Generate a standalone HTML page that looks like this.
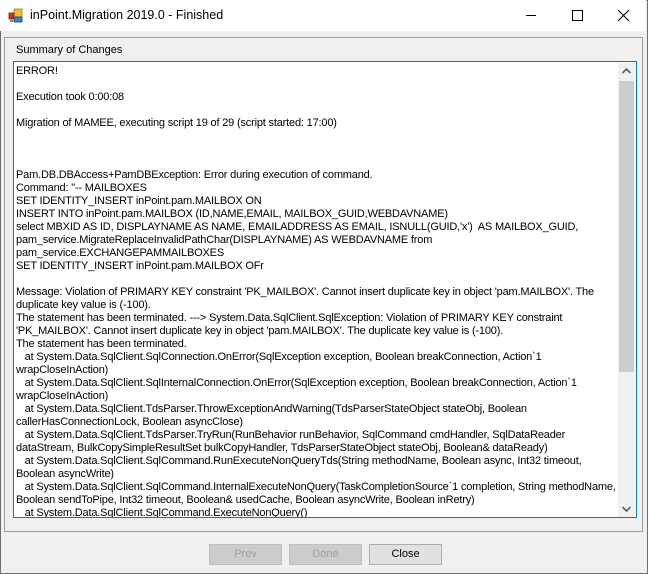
<!DOCTYPE html>
<html><head><style>
*{margin:0;padding:0;box-sizing:border-box}
body{width:648px;height:574px;overflow:hidden;background:#f0f0f0;font-family:"Liberation Sans",Arial,sans-serif;position:relative}
.win{position:absolute;left:0;top:0;width:648px;height:574px;border:1px solid #6e6e6e;border-top:1px solid #8a8a8a}
.title{position:absolute;left:0;top:0;width:646px;height:31px;background:#fff}
.ttext{position:absolute;left:30px;top:8px;font-size:12.5px;color:#000}
.ctl{position:absolute;top:0;height:31px;width:46px}
.grp{position:absolute;left:4px;top:37px;width:639px;height:495px;border:1px solid #a0a0a0}
.lbl{position:absolute;left:14px;top:44px;font-size:11px;background:#f0f0f0;padding:0 2px;color:#000}
.tb{position:absolute;left:13px;top:61px;width:624px;height:457px;border:1px solid #0078d7;background:#fff;overflow:hidden}
.txt{position:absolute;left:2px;top:3px;font-size:11px;line-height:13px;white-space:pre;color:#000;letter-spacing:-0.18px}
.sb{position:absolute;left:604px;top:1px;width:17px;height:454px;background:#f0f0f0}
.thumb{position:absolute;left:1px;top:18px;width:15px;height:291px;background:#cdcdcd}
.btn{position:absolute;top:544px;width:73px;height:21px;font-size:11px;text-align:center;line-height:19px}
.dis{background:#cccccc;border:1px solid #bfbfbf;color:#a0a0a0}
.en{background:#e1e1e1;border:1px solid #adadad;color:#000}
</style></head><body>
<div class="win"></div>
<div class="title">
<svg style="position:absolute;left:8px;top:8px" width="16" height="16" viewBox="0 0 16 16">
<rect x="6" y="1" width="8" height="8" fill="#f2c01e" stroke="#9a7a10" stroke-width="0.8"/>
<rect x="1" y="5" width="5" height="6" fill="#d03020" stroke="#7a1a10" stroke-width="0.8"/>
<rect x="6" y="9" width="8" height="5" fill="#4080d0" stroke="#204080" stroke-width="0.8"/>
<rect x="2" y="12" width="3" height="2" fill="#808080"/>
</svg>
<div class="ttext">inPoint.Migration 2019.0 - Finished</div>
<svg class="ctl" style="left:508px" viewBox="0 0 46 31"><line x1="18" y1="15.5" x2="28" y2="15.5" stroke="#000" stroke-width="1"/></svg>
<svg class="ctl" style="left:554px" viewBox="0 0 46 31"><rect x="18.5" y="10.5" width="10" height="10" fill="none" stroke="#000" stroke-width="1"/></svg>
<svg class="ctl" style="left:600px" viewBox="0 0 46 31"><path d="M18 10 L29 21 M29 10 L18 21" stroke="#000" stroke-width="1.1"/></svg>
</div>
<div class="grp"></div>
<div class="lbl">Summary of Changes</div>
<div class="tb">
<div class="txt">ERROR!

Execution took 0:00:08

Migration of MAMEE, executing script 19 of 29 (script started: 17:00)



Pam.DB.DBAccess+PamDBException: Error during execution of command.
Command: "-- MAILBOXES
SET IDENTITY_INSERT inPoint.pam.MAILBOX ON
INSERT INTO inPoint.pam.MAILBOX (ID,NAME,EMAIL, MAILBOX_GUID,WEBDAVNAME)
select MBXID AS ID, DISPLAYNAME AS NAME, EMAILADDRESS AS EMAIL, ISNULL(GUID,'x')  AS MAILBOX_GUID,
pam_service.MigrateReplaceInvalidPathChar(DISPLAYNAME) AS WEBDAVNAME from
pam_service.EXCHANGEPAMMAILBOXES
SET IDENTITY_INSERT inPoint.pam.MAILBOX OFr

Message: Violation of PRIMARY KEY constraint 'PK_MAILBOX'. Cannot insert duplicate key in object 'pam.MAILBOX'. The
duplicate key value is (-100).
The statement has been terminated. ---&gt; System.Data.SqlClient.SqlException: Violation of PRIMARY KEY constraint
'PK_MAILBOX'. Cannot insert duplicate key in object 'pam.MAILBOX'. The duplicate key value is (-100).
The statement has been terminated.
   at System.Data.SqlClient.SqlConnection.OnError(SqlException exception, Boolean breakConnection, Action`1
wrapCloseInAction)
   at System.Data.SqlClient.SqlInternalConnection.OnError(SqlException exception, Boolean breakConnection, Action`1
wrapCloseInAction)
   at System.Data.SqlClient.TdsParser.ThrowExceptionAndWarning(TdsParserStateObject stateObj, Boolean
callerHasConnectionLock, Boolean asyncClose)
   at System.Data.SqlClient.TdsParser.TryRun(RunBehavior runBehavior, SqlCommand cmdHandler, SqlDataReader
dataStream, BulkCopySimpleResultSet bulkCopyHandler, TdsParserStateObject stateObj, Boolean&amp; dataReady)
   at System.Data.SqlClient.SqlCommand.RunExecuteNonQueryTds(String methodName, Boolean async, Int32 timeout,
Boolean asyncWrite)
   at System.Data.SqlClient.SqlCommand.InternalExecuteNonQuery(TaskCompletionSource`1 completion, String methodName,
Boolean sendToPipe, Int32 timeout, Boolean&amp; usedCache, Boolean asyncWrite, Boolean inRetry)
   at System.Data.SqlClient.SqlCommand.ExecuteNonQuery()</div>
<div class="sb">
<svg style="position:absolute;left:0;top:0" width="17" height="17"><path d="M4.5 10 L8.5 6 L12.5 10" fill="none" stroke="#606060" stroke-width="1.6"/></svg>
<div class="thumb"></div>
<svg style="position:absolute;left:0;top:437px" width="17" height="17"><path d="M4.5 7 L8.5 11 L12.5 7" fill="none" stroke="#606060" stroke-width="1.6"/></svg>
</div>
</div>
<div class="btn dis" style="left:209px">Prev</div>
<div class="btn dis" style="left:289px">Done</div>
<div class="btn en" style="left:369px">Close</div>
</body></html>
